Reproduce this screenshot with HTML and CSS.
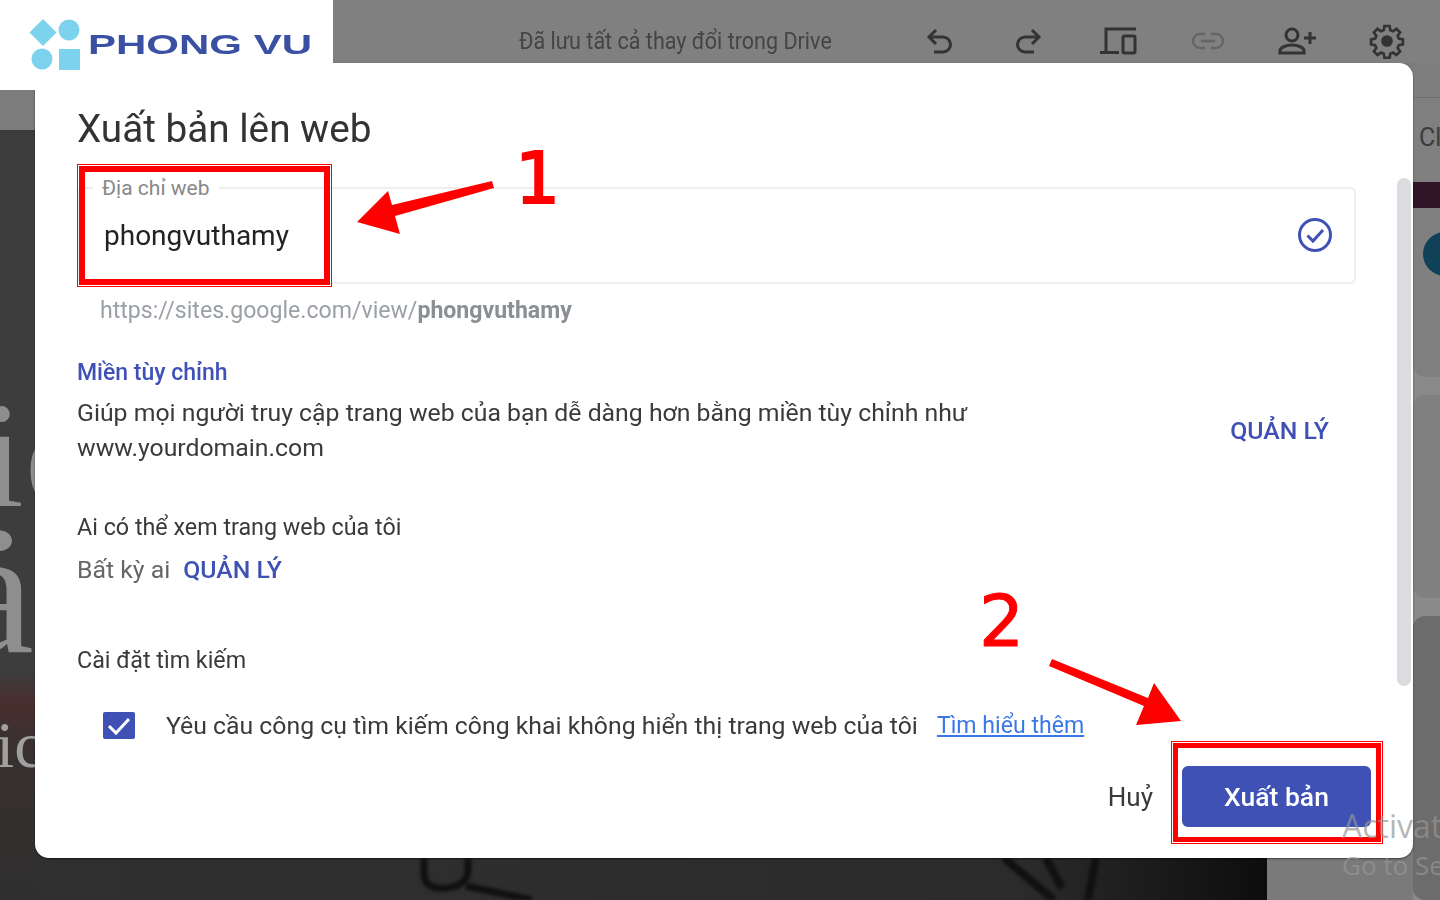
FILE: index.html
```html
<!DOCTYPE html>
<html lang="vi">
  <head>
    <meta charset="UTF-8" />
    <title>Xuất bản lên web</title>
    <link rel="stylesheet" href="styles.css">
  </head>
  <body>
    <div class="page">
      <!-- dimmed editor behind the dialog -->
      <div class="topbar">
        <span class="save-status">Đã lưu tất cả thay đổi trong Drive</span>
        <div class="tools">
          <svg class="tool" width="28" height="28" viewBox="0 0 28 28" fill="none" stroke="#333" stroke-width="3">
            <path d="M10 3 3 10l7 7M3 10h14a7.500 7.500 0 0 1 0 15H8"/>
          </svg>
          <svg class="tool" width="28" height="28" viewBox="0 0 28 28" fill="none" stroke="#333" stroke-width="3">
            <path d="M18 3l7 7-7 7M25 10H11a7.500 7.500 0 0 0 0 15h9"/>
          </svg>
          <svg class="tool" width="38" height="28" viewBox="0 0 38 28" fill="none" stroke="#333" stroke-width="3">
            <path d="M36 2H6v22M0 25.500h19"/>
            <rect x="23" y="9" width="12" height="17" rx="1.500"/>
          </svg>
          <svg class="tool" width="34" height="18" viewBox="0 0 34 18" fill="none" stroke="#666" stroke-width="2.500">
            <path d="M14 2H9a7 7 0 0 0 0 14h5M20 2h5a7 7 0 0 1 0 14h-5M10 9h14"/>
          </svg>
          <svg class="tool" width="40" height="28" viewBox="0 0 40 28" fill="none" stroke="#333" stroke-width="3">
            <circle cx="14" cy="8" r="6"/>
            <path d="M2 26v-2c0-4 7-6 12-6s12 2 12 6v2zM32 5v12M26 11h12"/>
          </svg>
          <svg class="tool" width="36" height="36" viewBox="0 0 24 24" fill="none" stroke="#333" stroke-width="1.800">
            <path d="M10.300 2h3.400l.5 2.700 1.800.8 2.300-1.600 2.400 2.400-1.600 2.300.8 1.800 2.700.5v3.400l-2.700.5-.8 1.800 1.600 2.300-2.400 2.400-2.300-1.600-1.800.8-.5 2.700h-3.400l-.5-2.700-1.800-.8-2.300 1.600-2.400-2.400 1.600-2.300-.8-1.800-2.700-.5v-3.400l2.700-.5.8-1.800-1.600-2.300 2.400-2.400 2.300 1.600 1.800-.8z"/>
            <circle cx="12" cy="12" r="3" fill="#333"/>
          </svg>
        </div>
      </div>
      <div class="workspace">
        <div class="left-strip">
          <div class="strip-head"></div>
          <div class="strip-body">
            <span class="hero-letters">ic</span>
            <span class="hero-letters second">ả</span>
            <span class="hero-letters small">ic</span>
          </div>
        </div>
        <div class="hero">
          <svg class="hero-art" width="1232" height="42" viewBox="0 0 1232 42" fill="none" stroke="#111">
            <path d="M388 0v16c0 12 10 15 22 14 14-1 22-8 22-18V0M430 28l66 14" stroke-width="7"/>
            <path d="M968 0l50 42M1010 0l16 30M1060 0l-8 42" stroke-width="8"/>
          </svg>
        </div>
        <div class="hero-side"></div>
        <div class="right-strip">
          <div class="side-title">Cl</div>
          <div class="side-band"></div>
          <div class="side-card first"><span class="side-avatar"></span></div>
          <div class="side-card"></div>
          <div class="side-card last"></div>
        </div>
      </div>

      <!-- publish dialog -->
      <div class="dialog">
        <h1 class="dialog-title">Xuất bản lên web</h1>
        <div class="field">
          <span class="field-label">Địa chỉ web</span>
          <span class="field-value">phongvuthamy</span>
          <svg class="field-check" width="36" height="36" viewBox="0 0 36 36" fill="none" stroke="#3f51b5">
            <circle cx="18" cy="18" r="15.500" stroke-width="3"/>
            <path d="M10.500 18.500l5.500 5.500 10-11" stroke-width="3"/>
          </svg>
        </div>
        <p class="site-url">https://sites.google.com/view/<b>phongvuthamy</b></p>

        <h2 class="section-link">Miền tùy chỉnh</h2>
        <div class="domain-row">
          <p class="domain-text">Giúp mọi người truy cập trang web của bạn dễ dàng hơn bằng miền tùy chỉnh như<br>www.yourdomain.com</p>
          <a class="manage manage-right">QUẢN LÝ</a>
        </div>

        <h2 class="section-title viewers">Ai có thể xem trang web của tôi</h2>
        <div class="viewer-row">
          <span class="viewer-value">Bất kỳ ai</span>
          <a class="manage">QUẢN LÝ</a>
        </div>

        <h2 class="section-title search">Cài đặt tìm kiếm</h2>
        <div class="search-row">
          <svg class="checkbox" width="32" height="27" viewBox="0 0 32 27">
            <rect width="32" height="27" rx="2" fill="#3f51b5"/>
            <path d="M6 14l7 7L26 7" fill="none" stroke="#fff" stroke-width="3"/>
          </svg>
          <span class="search-text">Yêu cầu công cụ tìm kiếm công khai không hiển thị trang web của tôi</span>
          <a class="learn-more">Tìm hiểu thêm</a>
        </div>

        <div class="actions">
          <span class="cancel">Huỷ</span>
          <button class="publish">Xuất bản</button>
        </div>
        <div class="scrollbar"></div>
      </div>

      <!-- annotations on top of the screenshot -->
      <div class="logo">
        <svg width="52" height="52" viewBox="0 0 52 52" fill="#7dd3ee">
          <path d="M14 0l13.500 13.500L14 27 .5 13.500z"/>
          <circle cx="40" cy="11" r="10.500"/>
          <circle cx="13" cy="40" r="10.500"/>
          <rect x="30" y="30" width="21" height="21"/>
        </svg>
        <span class="logo-text">PHONG VU</span>
      </div>
      <div class="mark-box box-one"></div>
      <div class="mark-box box-two"></div>
      <span class="mark-number num-one">1</span>
      <span class="mark-number num-two">2</span>
      <svg class="arrow arrow-one" width="140" height="60" viewBox="0 0 140 60" fill="#f00">
        <path d="M2 44 33 13l4 14L137 3l2 7L40 38l5 18z"/>
      </svg>
      <svg class="arrow arrow-two" width="136" height="70" viewBox="0 0 136 70" fill="#f00">
        <path d="M3 1 99 40l6-15 27 38-45 4 8-19L0 8z"/>
      </svg>
      <div class="activate">
        <div class="activate-title">Activate Windows</div>
        <div class="activate-sub">Go to Settings</div>
      </div>
    </div>
  </body>
</html>
```

FILE: styles.css
```css
* {
  box-sizing: border-box;
  margin: 0;
  padding: 0;
}
body {
  font-family: "Roboto", "Noto Sans", sans-serif;
  background: #808080;
}
.page {
  position: relative;
  display: flex;
  flex-direction: column;
  width: 1440px;
  height: 900px;
  overflow: hidden;
}

/* dimmed editor */
.topbar {
  display: flex;
  align-items: center;
  height: 63px;
  padding-left: 519px;
  background: #808080;
  flex-shrink: 0;
}
.save-status {
  width: 313px;
  font-size: 23px;
  color: #444;
  white-space: nowrap;
  margin-top: 19px;
  filter: blur(0.4px);
  transform: scaleX(0.937);
  transform-origin: left center;
}
.tools {
  display: flex;
  align-items: center;
  margin-left: 94px;
  margin-top: 19px;
  filter: blur(0.4px);
}
.tool:nth-child(1) { margin-right: 60px; }
.tool:nth-child(2) { margin-right: 58px; }
.tool:nth-child(3) { margin-right: 53px; }
.tool:nth-child(4) { margin-right: 53px; }
.tool:nth-child(5) { margin-right: 51px; }

.workspace {
  flex: 1;
  display: flex;
}
.left-strip {
  width: 36px;
  display: flex;
  flex-direction: column;
  overflow: hidden;
}
.strip-head {
  height: 67px;
  background: #7c7c7c;
}
.strip-body {
  flex: 1;
  display: flex;
  flex-direction: column;
  align-items: flex-start;
  background: linear-gradient(#3d3d3d 0, #3d3d3d 540px, #4a2e2e 575px, #3a3030 610px, #2f2f2f 100%);
  padding-top: 260px;
}
.hero-letters {
  font-family: "Liberation Serif", serif;
  font-size: 150px;
  line-height: 130px;
  letter-spacing: 1px;
  color: #8e8e8e;
  margin-left: -18px;
  white-space: nowrap;
  filter: blur(0.6px);
}
.hero-letters.second {
  font-size: 180px;
  letter-spacing: 0;
  margin-top: 7px;
  margin-left: -46px;
}
.hero-letters.small {
  font-size: 66px;
  line-height: 70px;
  letter-spacing: 0;
  margin-top: 53px;
  margin-left: -4px;
  color: #a0a0a0;
}
.hero {
  flex: 1;
  display: flex;
  align-items: flex-end;
  overflow: hidden;
  background: linear-gradient(90deg, #303030 0, #2b2b2b 80%, #0d0d0d 100%);
}
.hero-art {
  flex-shrink: 0;
  filter: blur(1.5px);
}
.hero-side {
  width: 146px;
  background: #7a7a7a;
}
.right-strip {
  width: 27px;
  display: flex;
  flex-direction: column;
  background: #8a8a8a;
  overflow: hidden;
}
.side-title {
  height: 119px;
  padding-top: 60px;
  font-size: 25px;
  color: #3c3c3c;
  background: linear-gradient(#7e7e7e 34px, #6e6e6e 34px, #6e6e6e 35px, #808080 35px);
  padding-left: 6px;
  line-height: 30px;
}
.side-band {
  height: 26px;
  background: #301527;
}
.side-card {
  height: 203px;
  margin-bottom: 18px;
  background: #808080;
  border-radius: 12px 0 0 12px;
}
.side-card.first {
  height: 169px;
  padding-top: 24px;
  border-radius: 0 0 0 12px;
}
.side-avatar {
  display: block;
  width: 44px;
  height: 44px;
  margin-left: 10px;
  border-radius: 50%;
  background: #0f4158;
}
.side-card.last {
  flex: 1;
  margin-bottom: 0;
  background: #6c6c6c;
}

/* dialog */
.dialog {
  position: absolute;
  left: 35px;
  top: 63px;
  width: 1378px;
  height: 795px;
  padding: 41px 42px 0;
  background: #fff;
  border-radius: 14px;
  box-shadow: 0 1px 2px rgba(0, 0, 0, 0.5);
}
.dialog > * {
  filter: blur(0.4px);
}
.dialog-title {
  font-size: 38.700px;
  font-weight: 400;
  line-height: 50px;
  color: #333;
}
.field {
  position: relative;
  display: flex;
  align-items: center;
  justify-content: space-between;
  width: 1279px;
  height: 97px;
  margin-top: 33px;
  padding: 0 21px 0 25px;
  border: 2px solid #eee;
  border-radius: 6px;
}
.field-label {
  position: absolute;
  left: 14px;
  top: -13px;
  padding: 0 9px;
  background: #fff;
  font-size: 21px;
  line-height: 24px;
  color: #888;
}
.field-value {
  font-size: 28px;
  color: #222;
}
.field-check {
  margin-top: -2px;
}
.site-url {
  margin: 13px 0 0 23px;
  font-size: 23.100px;
  line-height: 28px;
  color: #9aa0a6;
}
.site-url b {
  color: #8a8f94;
  font-weight: 700;
}
.section-link {
  margin-top: 34px;
  font-size: 23px;
  font-weight: 500;
  line-height: 28px;
  color: #3f51b5;
}
.domain-row {
  display: flex;
  align-items: center;
  justify-content: space-between;
  margin-top: 8px;
  padding-right: 42px;
}
.domain-text {
  font-size: 24.800px;
  line-height: 35px;
  color: #3a3a3a;
}
.manage {
  font-size: 24.800px;
  font-weight: 500;
  line-height: 28px;
  color: #3f51b5;
}
.manage-right {
  margin-top: 1px;
}
.section-title {
  font-size: 23.300px;
  font-weight: 400;
  line-height: 28px;
  color: #3a3a3a;
}
.section-title.viewers {
  margin-top: 48px;
}
.viewer-row {
  display: flex;
  align-items: center;
  gap: 13px;
  margin-top: 15px;
}
.viewer-value {
  font-size: 24.800px;
  line-height: 28px;
  color: #666;
}
.section-title.search {
  margin-top: 62px;
}
.search-row {
  display: flex;
  align-items: center;
  margin: 38px 0 0 26px;
}
.checkbox {
  flex-shrink: 0;
  margin-top: -2px;
}
.search-text {
  margin-left: 31px;
  font-size: 24.800px;
  line-height: 28px;
  color: #3a3a3a;
  white-space: nowrap;
}
.learn-more {
  margin-left: 19px;
  font-size: 23.100px;
  line-height: 28px;
  color: #3b78e7;
  text-decoration: underline;
  white-space: nowrap;
}
.actions {
  display: flex;
  align-items: center;
  justify-content: flex-end;
  gap: 29px;
  margin: 26px 0 0 0;
}
.cancel {
  font-size: 26px;
  color: #3a3a3a;
}
.publish {
  width: 189px;
  height: 61px;
  border: none;
  border-radius: 6px;
  background: #3f51b5;
  color: #fff;
  font-family: inherit;
  font-size: 26.500px;
  font-weight: 500;
}
.scrollbar {
  position: absolute;
  right: 2px;
  top: 115px;
  width: 14px;
  height: 508px;
  border-radius: 7px;
  background: #dadce0;
}

/* annotations */
.logo {
  position: absolute;
  left: 0;
  top: 0;
  display: flex;
  align-items: center;
  width: 333px;
  height: 90px;
  padding: 0 0 0 29px;
  background: #fff;
}
.logo-text {
  margin-left: 7px;
  font-family: "Liberation Sans", sans-serif;
  font-size: 28px;
  font-weight: 700;
  color: #3a50a2;
  white-space: nowrap;
  transform: scaleX(1.5);
  transform-origin: left center;
}
.mark-box {
  position: absolute;
  border: 6px solid #f00;
  outline: 1px solid #f00;
  outline-offset: 1px;
}
.box-one {
  left: 79px;
  top: 166px;
  width: 251px;
  height: 119px;
}
.box-two {
  left: 1173px;
  top: 743px;
  width: 208px;
  height: 99px;
  border-width: 5px;
}
.mark-number {
  position: absolute;
  font-family: "DejaVu Sans", sans-serif;
  font-size: 71px;
  line-height: 72px;
  color: #f00;
  -webkit-text-stroke: 1px #f00;
}
.num-one {
  left: 515px;
  top: 143px;
  -webkit-text-stroke: 2px #f00;
}
.num-two {
  left: 979px;
  top: 586px;
}
.arrow {
  position: absolute;
}
.arrow-one {
  left: 355px;
  top: 178px;
}
.arrow-two {
  left: 1049px;
  top: 658px;
}
.activate {
  position: absolute;
  left: 1342px;
  top: 806px;
  color: rgba(150, 150, 150, 0.7);
  white-space: nowrap;
  font-family: "Open Sans", sans-serif;
}
.activate-title {
  font-size: 32px;
  line-height: 40px;
}
.activate-sub {
  font-size: 26px;
  line-height: 38px;
}
```
